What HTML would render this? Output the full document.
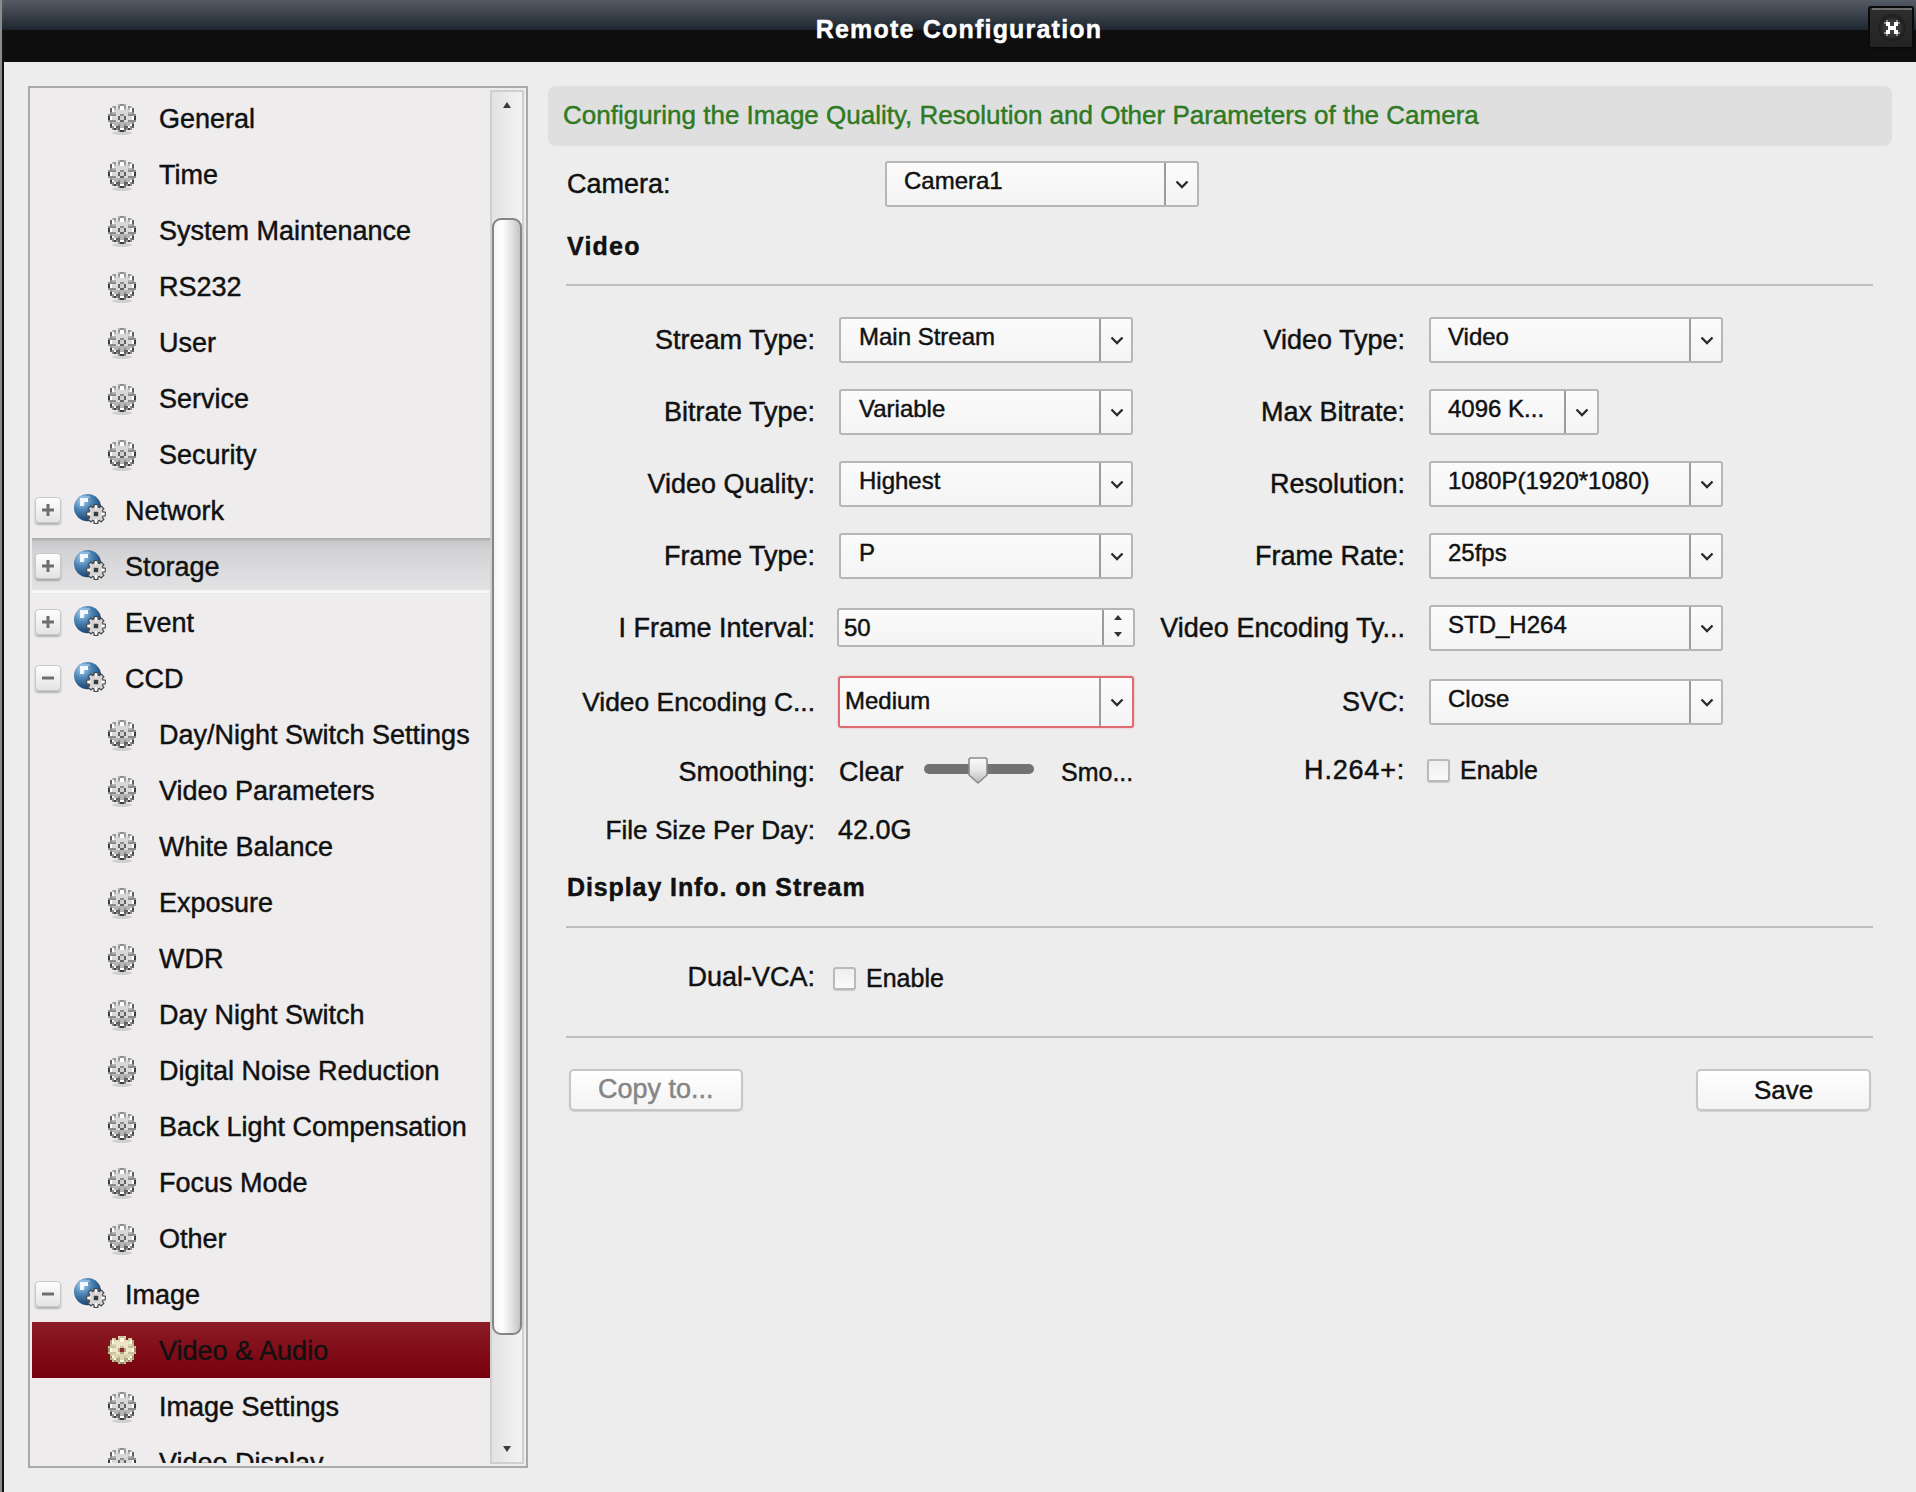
<!DOCTYPE html>
<html><head><meta charset="utf-8"><title>Remote Configuration</title><style>
*{margin:0;padding:0;box-sizing:border-box}
html,body{width:1916px;height:1492px;overflow:hidden;background:#ededed;font-family:"Liberation Sans",sans-serif}
.t{position:absolute;line-height:1;white-space:nowrap;-webkit-text-stroke:0.45px currentColor}
#title{position:absolute;left:0;top:0;width:1916px;height:30px;background:linear-gradient(#555b64,#1d2630)}
#titleblack{position:absolute;left:0;top:30px;width:1916px;height:32px;background:#0e0e0e}
#leftedge{position:absolute;left:0;top:0;width:4px;height:1492px;background:linear-gradient(90deg,#8c8c8c 0,#8c8c8c 2px,#111 2px)}#leftedge2{position:absolute;left:2px;top:0;width:2px;height:30px;background:linear-gradient(#5a6068,#1f2830)}
#closebtn{position:absolute;left:1868px;top:6px;width:46px;height:43px;border-radius:3px;background:linear-gradient(#2e2e2e,#232323);border:2px solid #0a0a0a}#closehl{position:absolute;left:1872px;top:8px;width:40px;height:2px;background:#6e6e6e}
#closering{position:absolute;left:1878px;top:14px;width:28px;height:28px;border-radius:50%;background:radial-gradient(circle,#454545 0,#353535 40%,#1e1e1e 64%,#2a2a2a 82%,rgba(40,40,40,0) 100%)}
#tree{position:absolute;left:30px;top:88px;width:460px;height:1375px;background:#eeeced;overflow:hidden}
#treeborder{position:absolute;left:28px;top:86px;width:500px;height:1382px;border:2px solid #a9a9a9}
.hover{position:absolute;left:2px;width:458px;height:56px;background:linear-gradient(#acacae 0,#b4b4b6 2px,#c6c6c8 3px,#d2d2d4 20%,#dcdcde 60%,#e2e2e4 92%,#f7f7f7 94%,#f7f7f7 98%,#e9e9e9 98%)}
.sel{position:absolute;left:2px;width:458px;height:56px;background:linear-gradient(#8b1c24,#78000e)}
.ic{position:absolute}
.exp{position:absolute;width:26px;height:26px;border-radius:4px;background:linear-gradient(#ffffff,#e3e3e3);border:1px solid #c9c9c9;box-shadow:0 2px 2px rgba(0,0,0,0.25)}
.exp svg{position:absolute;left:-1px;top:-1px}
#sbtrack{position:absolute;left:490px;top:90px;width:34px;height:1374px;border:2px solid #cfcfcf;background:linear-gradient(90deg,#e2e2e2,#f3f3f3)}
#sbthumb{position:absolute;left:492px;top:218px;width:30px;height:1117px;border:2px solid #858585;border-radius:9px 9px 9px 9px;background:linear-gradient(90deg,#f4f4f4 0,#ffffff 30%,#e0e0e0 70%,#c4c4c4 100%)}
#hdr{position:absolute;left:548px;top:86px;width:1344px;height:60px;border-radius:8px;background:#dfdfdf}
.dd{position:absolute;border:2px solid #b6b6b6;border-radius:3px;background:linear-gradient(#fbfbfb,#f4f4f4)}
.dd.red{border-color:#e06a70;box-shadow:0 0 2px rgba(220,60,60,0.4)}
.ddiv{position:absolute;width:2px;background:#9c9c9c}
.chev{position:absolute}
.hr{position:absolute;left:566px;width:1307px;height:2px;background:#bdbdbd}
#sltrack{position:absolute;left:924px;top:764px;width:110px;height:10px;border-radius:5px;background:#727272}
.cb{position:absolute;width:23px;height:23px;border:2px solid #b9b9b9;border-radius:3px;background:linear-gradient(#eeeeee,#fafafa);box-shadow:0 1px 1px rgba(0,0,0,0.15)}
.btn{position:absolute;border:2px solid #c6c6c6;border-radius:5px;background:linear-gradient(#ffffff,#f3f3f3);box-shadow:0 1px 1px rgba(0,0,0,0.12)}
</style></head>
<body><svg width="0" height="0" style="position:absolute"><defs>
<radialGradient id="gg" cx="0.35" cy="0.3" r="0.8"><stop offset="0" stop-color="#ffffff"/><stop offset="0.5" stop-color="#dcdcdc"/><stop offset="1" stop-color="#a9a9a9"/></radialGradient>
<radialGradient id="ggs" cx="0.35" cy="0.3" r="0.8"><stop offset="0" stop-color="#fffbe6"/><stop offset="0.5" stop-color="#ebe3bd"/><stop offset="1" stop-color="#c8bd8e"/></radialGradient>
<radialGradient id="glob" cx="0.3" cy="0.25" r="0.85"><stop offset="0" stop-color="#a9d0ec"/><stop offset="0.4" stop-color="#4f86b8"/><stop offset="0.8" stop-color="#23507f"/><stop offset="1" stop-color="#15345a"/></radialGradient>
<path id="gp" d="M-2.60 -10.69 L-2.60 -13.55 L2.60 -13.55 L2.60 -10.69 L5.72 -9.40 L7.74 -11.42 L11.42 -7.74 L9.40 -5.72 L10.69 -2.60 L13.55 -2.60 L13.55 2.60 L10.69 2.60 L9.40 5.72 L11.42 7.74 L7.74 11.42 L5.72 9.40 L2.60 10.69 L2.60 13.55 L-2.60 13.55 L-2.60 10.69 L-5.72 9.40 L-7.74 11.42 L-11.42 7.74 L-9.40 5.72 L-10.69 2.60 L-13.55 2.60 L-13.55 -2.60 L-10.69 -2.60 L-9.40 -5.72 L-11.42 -7.74 L-7.74 -11.42 L-5.72 -9.40 Z"/>
<path id="gps" d="M-2.00 -7.02 L-2.00 -9.29 L2.00 -9.29 L2.00 -7.02 L3.55 -6.38 L5.15 -7.98 L7.98 -5.15 L6.38 -3.55 L7.02 -2.00 L9.29 -2.00 L9.29 2.00 L7.02 2.00 L6.38 3.55 L7.98 5.15 L5.15 7.98 L3.55 6.38 L2.00 7.02 L2.00 9.29 L-2.00 9.29 L-2.00 7.02 L-3.55 6.38 L-5.15 7.98 L-7.98 5.15 L-6.38 3.55 L-7.02 2.00 L-9.29 2.00 L-9.29 -2.00 L-7.02 -2.00 L-6.38 -3.55 L-7.98 -5.15 L-5.15 -7.98 L-3.55 -6.38 Z"/>
<symbol id="gear" viewBox="0 0 32 34"><ellipse cx="16" cy="31" rx="10" ry="2" fill="#000" opacity="0.12"/><g shape-rendering="crispEdges"><rect x="12" y="2" width="2" height="2" fill="#b4b4b4"/><rect x="14" y="2" width="4" height="2" fill="#8c8c8c"/><rect x="18" y="2" width="2" height="2" fill="#b4b4b4"/><rect x="6" y="4" width="2" height="2" fill="#b4b4b4"/><rect x="8" y="4" width="2" height="2" fill="#8c8c8c"/><rect x="12" y="4" width="2" height="2" fill="#8c8c8c"/><rect x="14" y="4" width="4" height="2" fill="#ffffff"/><rect x="18" y="4" width="2" height="2" fill="#8c8c8c"/><rect x="22" y="4" width="2" height="2" fill="#8c8c8c"/><rect x="24" y="4" width="2" height="2" fill="#b4b4b4"/><rect x="4" y="6" width="2" height="2" fill="#626262"/><rect x="6" y="6" width="2" height="2" fill="#ffffff"/><rect x="8" y="6" width="2" height="2" fill="#b4b4b4"/><rect x="10" y="6" width="2" height="2" fill="#d9d9d9"/><rect x="12" y="6" width="2" height="2" fill="#b4b4b4"/><rect x="14" y="6" width="4" height="2" fill="#ffffff"/><rect x="18" y="6" width="2" height="2" fill="#b4b4b4"/><rect x="20" y="6" width="2" height="2" fill="#d9d9d9"/><rect x="22" y="6" width="2" height="2" fill="#b4b4b4"/><rect x="24" y="6" width="2" height="2" fill="#ffffff"/><rect x="26" y="6" width="2" height="2" fill="#626262"/><rect x="4" y="8" width="2" height="2" fill="#626262"/><rect x="6" y="8" width="2" height="2" fill="#ffffff"/><rect x="8" y="8" width="16" height="2" fill="#d9d9d9"/><rect x="24" y="8" width="2" height="2" fill="#ffffff"/><rect x="26" y="8" width="2" height="2" fill="#626262"/><rect x="4" y="10" width="2" height="2" fill="#8c8c8c"/><rect x="6" y="10" width="4" height="2" fill="#b4b4b4"/><rect x="10" y="10" width="12" height="2" fill="#d9d9d9"/><rect x="22" y="10" width="4" height="2" fill="#b4b4b4"/><rect x="26" y="10" width="2" height="2" fill="#8c8c8c"/><rect x="2" y="12" width="8" height="2" fill="#8c8c8c"/><rect x="10" y="12" width="4" height="2" fill="#d9d9d9"/><rect x="14" y="12" width="4" height="2" fill="#8c8c8c"/><rect x="18" y="12" width="4" height="2" fill="#d9d9d9"/><rect x="22" y="12" width="8" height="2" fill="#8c8c8c"/><rect x="2" y="14" width="2" height="2" fill="#3c3c3c"/><rect x="4" y="14" width="2" height="2" fill="#ffffff"/><rect x="6" y="14" width="6" height="2" fill="#d9d9d9"/><rect x="12" y="14" width="2" height="2" fill="#626262"/><rect x="14" y="14" width="4" height="2" fill="#d0d0d0"/><rect x="18" y="14" width="2" height="2" fill="#626262"/><rect x="20" y="14" width="6" height="2" fill="#d9d9d9"/><rect x="26" y="14" width="2" height="2" fill="#ffffff"/><rect x="28" y="14" width="2" height="2" fill="#3c3c3c"/><rect x="2" y="16" width="2" height="2" fill="#3c3c3c"/><rect x="4" y="16" width="2" height="2" fill="#ffffff"/><rect x="6" y="16" width="6" height="2" fill="#d9d9d9"/><rect x="12" y="16" width="2" height="2" fill="#626262"/><rect x="14" y="16" width="4" height="2" fill="#d0d0d0"/><rect x="18" y="16" width="2" height="2" fill="#626262"/><rect x="20" y="16" width="6" height="2" fill="#d9d9d9"/><rect x="26" y="16" width="2" height="2" fill="#ffffff"/><rect x="28" y="16" width="2" height="2" fill="#3c3c3c"/><rect x="2" y="18" width="8" height="2" fill="#8c8c8c"/><rect x="10" y="18" width="4" height="2" fill="#d9d9d9"/><rect x="14" y="18" width="4" height="2" fill="#626262"/><rect x="18" y="18" width="4" height="2" fill="#d9d9d9"/><rect x="22" y="18" width="8" height="2" fill="#8c8c8c"/><rect x="4" y="20" width="2" height="2" fill="#8c8c8c"/><rect x="6" y="20" width="20" height="2" fill="#b4b4b4"/><rect x="26" y="20" width="2" height="2" fill="#8c8c8c"/><rect x="4" y="22" width="2" height="2" fill="#3c3c3c"/><rect x="6" y="22" width="2" height="2" fill="#ffffff"/><rect x="8" y="22" width="4" height="2" fill="#b4b4b4"/><rect x="12" y="22" width="2" height="2" fill="#8c8c8c"/><rect x="14" y="22" width="4" height="2" fill="#b4b4b4"/><rect x="18" y="22" width="2" height="2" fill="#8c8c8c"/><rect x="20" y="22" width="4" height="2" fill="#b4b4b4"/><rect x="24" y="22" width="2" height="2" fill="#ffffff"/><rect x="26" y="22" width="2" height="2" fill="#3c3c3c"/><rect x="4" y="24" width="2" height="2" fill="#626262"/><rect x="6" y="24" width="2" height="2" fill="#8c8c8c"/><rect x="8" y="24" width="2" height="2" fill="#ffffff"/><rect x="10" y="24" width="4" height="2" fill="#626262"/><rect x="14" y="24" width="4" height="2" fill="#b4b4b4"/><rect x="18" y="24" width="4" height="2" fill="#626262"/><rect x="22" y="24" width="2" height="2" fill="#ffffff"/><rect x="24" y="24" width="2" height="2" fill="#8c8c8c"/><rect x="26" y="24" width="2" height="2" fill="#626262"/><rect x="6" y="26" width="2" height="2" fill="#8c8c8c"/><rect x="8" y="26" width="2" height="2" fill="#3c3c3c"/><rect x="10" y="26" width="2" height="2" fill="#8c8c8c"/><rect x="12" y="26" width="2" height="2" fill="#626262"/><rect x="14" y="26" width="4" height="2" fill="#ffffff"/><rect x="18" y="26" width="2" height="2" fill="#626262"/><rect x="20" y="26" width="2" height="2" fill="#8c8c8c"/><rect x="22" y="26" width="2" height="2" fill="#3c3c3c"/><rect x="24" y="26" width="2" height="2" fill="#8c8c8c"/><rect x="12" y="28" width="2" height="2" fill="#8c8c8c"/><rect x="14" y="28" width="4" height="2" fill="#3c3c3c"/><rect x="18" y="28" width="2" height="2" fill="#8c8c8c"/></g></symbol>
<symbol id="gearsel" viewBox="0 0 32 34"><g shape-rendering="crispEdges"><rect x="12" y="2" width="2" height="2" fill="#ddd5b0"/><rect x="14" y="2" width="4" height="2" fill="#c8c09a"/><rect x="18" y="2" width="2" height="2" fill="#ddd5b0"/><rect x="6" y="4" width="2" height="2" fill="#ddd5b0"/><rect x="8" y="4" width="2" height="2" fill="#c8c09a"/><rect x="12" y="4" width="2" height="2" fill="#c8c09a"/><rect x="14" y="4" width="4" height="2" fill="#fffbe2"/><rect x="18" y="4" width="2" height="2" fill="#c8c09a"/><rect x="22" y="4" width="2" height="2" fill="#c8c09a"/><rect x="24" y="4" width="2" height="2" fill="#ddd5b0"/><rect x="4" y="6" width="2" height="2" fill="#b0a880"/><rect x="6" y="6" width="2" height="2" fill="#fffbe2"/><rect x="8" y="6" width="2" height="2" fill="#ddd5b0"/><rect x="10" y="6" width="2" height="2" fill="#ece5c6"/><rect x="12" y="6" width="2" height="2" fill="#ddd5b0"/><rect x="14" y="6" width="4" height="2" fill="#fffbe2"/><rect x="18" y="6" width="2" height="2" fill="#ddd5b0"/><rect x="20" y="6" width="2" height="2" fill="#ece5c6"/><rect x="22" y="6" width="2" height="2" fill="#ddd5b0"/><rect x="24" y="6" width="2" height="2" fill="#fffbe2"/><rect x="26" y="6" width="2" height="2" fill="#b0a880"/><rect x="4" y="8" width="2" height="2" fill="#b0a880"/><rect x="6" y="8" width="2" height="2" fill="#fffbe2"/><rect x="8" y="8" width="16" height="2" fill="#ece5c6"/><rect x="24" y="8" width="2" height="2" fill="#fffbe2"/><rect x="26" y="8" width="2" height="2" fill="#b0a880"/><rect x="4" y="10" width="2" height="2" fill="#c8c09a"/><rect x="6" y="10" width="4" height="2" fill="#ddd5b0"/><rect x="10" y="10" width="12" height="2" fill="#ece5c6"/><rect x="22" y="10" width="4" height="2" fill="#ddd5b0"/><rect x="26" y="10" width="2" height="2" fill="#c8c09a"/><rect x="2" y="12" width="8" height="2" fill="#c8c09a"/><rect x="10" y="12" width="4" height="2" fill="#ece5c6"/><rect x="14" y="12" width="4" height="2" fill="#c8c09a"/><rect x="18" y="12" width="4" height="2" fill="#ece5c6"/><rect x="22" y="12" width="8" height="2" fill="#c8c09a"/><rect x="2" y="14" width="2" height="2" fill="#989068"/><rect x="4" y="14" width="2" height="2" fill="#fffbe2"/><rect x="6" y="14" width="6" height="2" fill="#ece5c6"/><rect x="12" y="14" width="2" height="2" fill="#b0a880"/><rect x="14" y="14" width="4" height="2" fill="#8e2a2c"/><rect x="18" y="14" width="2" height="2" fill="#b0a880"/><rect x="20" y="14" width="6" height="2" fill="#ece5c6"/><rect x="26" y="14" width="2" height="2" fill="#fffbe2"/><rect x="28" y="14" width="2" height="2" fill="#989068"/><rect x="2" y="16" width="2" height="2" fill="#989068"/><rect x="4" y="16" width="2" height="2" fill="#fffbe2"/><rect x="6" y="16" width="6" height="2" fill="#ece5c6"/><rect x="12" y="16" width="2" height="2" fill="#b0a880"/><rect x="14" y="16" width="4" height="2" fill="#8e2a2c"/><rect x="18" y="16" width="2" height="2" fill="#b0a880"/><rect x="20" y="16" width="6" height="2" fill="#ece5c6"/><rect x="26" y="16" width="2" height="2" fill="#fffbe2"/><rect x="28" y="16" width="2" height="2" fill="#989068"/><rect x="2" y="18" width="8" height="2" fill="#c8c09a"/><rect x="10" y="18" width="4" height="2" fill="#ece5c6"/><rect x="14" y="18" width="4" height="2" fill="#b0a880"/><rect x="18" y="18" width="4" height="2" fill="#ece5c6"/><rect x="22" y="18" width="8" height="2" fill="#c8c09a"/><rect x="4" y="20" width="2" height="2" fill="#c8c09a"/><rect x="6" y="20" width="20" height="2" fill="#ddd5b0"/><rect x="26" y="20" width="2" height="2" fill="#c8c09a"/><rect x="4" y="22" width="2" height="2" fill="#989068"/><rect x="6" y="22" width="2" height="2" fill="#fffbe2"/><rect x="8" y="22" width="4" height="2" fill="#ddd5b0"/><rect x="12" y="22" width="2" height="2" fill="#c8c09a"/><rect x="14" y="22" width="4" height="2" fill="#ddd5b0"/><rect x="18" y="22" width="2" height="2" fill="#c8c09a"/><rect x="20" y="22" width="4" height="2" fill="#ddd5b0"/><rect x="24" y="22" width="2" height="2" fill="#fffbe2"/><rect x="26" y="22" width="2" height="2" fill="#989068"/><rect x="4" y="24" width="2" height="2" fill="#b0a880"/><rect x="6" y="24" width="2" height="2" fill="#c8c09a"/><rect x="8" y="24" width="2" height="2" fill="#fffbe2"/><rect x="10" y="24" width="4" height="2" fill="#b0a880"/><rect x="14" y="24" width="4" height="2" fill="#ddd5b0"/><rect x="18" y="24" width="4" height="2" fill="#b0a880"/><rect x="22" y="24" width="2" height="2" fill="#fffbe2"/><rect x="24" y="24" width="2" height="2" fill="#c8c09a"/><rect x="26" y="24" width="2" height="2" fill="#b0a880"/><rect x="6" y="26" width="2" height="2" fill="#c8c09a"/><rect x="8" y="26" width="2" height="2" fill="#989068"/><rect x="10" y="26" width="2" height="2" fill="#c8c09a"/><rect x="12" y="26" width="2" height="2" fill="#b0a880"/><rect x="14" y="26" width="4" height="2" fill="#fffbe2"/><rect x="18" y="26" width="2" height="2" fill="#b0a880"/><rect x="20" y="26" width="2" height="2" fill="#c8c09a"/><rect x="22" y="26" width="2" height="2" fill="#989068"/><rect x="24" y="26" width="2" height="2" fill="#c8c09a"/><rect x="12" y="28" width="2" height="2" fill="#c8c09a"/><rect x="14" y="28" width="4" height="2" fill="#989068"/><rect x="18" y="28" width="2" height="2" fill="#c8c09a"/></g></symbol>
<symbol id="globe" viewBox="0 0 36 36">
 <circle cx="15.6" cy="15.6" r="13.6" fill="url(#glob)"/>
 <path d="M8 6 H16 V10 H12 V14 H8 Z" fill="#f3f8fc"/>
 <path d="M7 4 H18 V6 H7 Z" fill="#8dbbe0" opacity="0.8"/>
 <g transform="translate(24,22)">
  <use href="#gps" fill="#d6d6d6" stroke="#4a4a4a" stroke-width="1.2" stroke-linejoin="round"/>
  <g fill="#fff"><rect x="-1" y="-8.5" width="2" height="3"/><rect x="-1" y="5.5" width="2" height="3"/><rect x="-8.5" y="-1" width="3" height="2"/><rect x="5.5" y="-1" width="3" height="2"/></g>
  <rect x="-2.2" y="-2.2" width="4.4" height="4.4" fill="#3a3a3a"/>
 </g>
</symbol>
<symbol id="plus" viewBox="0 0 26 26"><path d="M7 13 H19 M13 7 V19" stroke="#6e6e6e" stroke-width="3"/></symbol>
<symbol id="minus" viewBox="0 0 26 26"><path d="M7 13 H19" stroke="#6e6e6e" stroke-width="3"/></symbol>
<symbol id="chev" viewBox="0 0 16 12"><path d="M2.5 3.5 L8 9 L13.5 3.5" fill="none" stroke="#2a2a2a" stroke-width="2.3"/></symbol>
</defs></svg>
<div id="title"></div><div id="titleblack"></div>
<div id="leftedge"></div><div id="leftedge2"></div>
<div class="t" style="left:659px;width:600px;text-align:center;top:16.6px;font-size:25px;font-weight:bold;color:#fff;letter-spacing:1.2px">Remote Configuration</div>
<div id="closebtn"></div><div id="closehl"></div><div id="closering"></div><svg style="position:absolute;left:1884px;top:20px" width="16" height="16" shape-rendering="crispEdges"><rect x="2" y="2" width="2" height="2" fill="#fff"/><rect x="4" y="2" width="2" height="2" fill="#fff"/><rect x="10" y="2" width="2" height="2" fill="#fff"/><rect x="12" y="2" width="2" height="2" fill="#fff"/><rect x="2" y="4" width="2" height="2" fill="#fff"/><rect x="4" y="4" width="2" height="2" fill="#fff"/><rect x="10" y="4" width="2" height="2" fill="#fff"/><rect x="12" y="4" width="2" height="2" fill="#fff"/><rect x="4" y="6" width="2" height="2" fill="#fff"/><rect x="6" y="6" width="2" height="2" fill="#fff"/><rect x="8" y="6" width="2" height="2" fill="#fff"/><rect x="10" y="6" width="2" height="2" fill="#fff"/><rect x="4" y="8" width="2" height="2" fill="#fff"/><rect x="6" y="8" width="2" height="2" fill="#fff"/><rect x="8" y="8" width="2" height="2" fill="#fff"/><rect x="10" y="8" width="2" height="2" fill="#fff"/><rect x="2" y="10" width="2" height="2" fill="#fff"/><rect x="4" y="10" width="2" height="2" fill="#fff"/><rect x="10" y="10" width="2" height="2" fill="#fff"/><rect x="12" y="10" width="2" height="2" fill="#fff"/><rect x="2" y="12" width="2" height="2" fill="#fff"/><rect x="4" y="12" width="2" height="2" fill="#fff"/><rect x="10" y="12" width="2" height="2" fill="#fff"/><rect x="12" y="12" width="2" height="2" fill="#fff"/><rect x="2" y="0" width="2" height="2" fill="#8a8a8a"/><rect x="12" y="0" width="2" height="2" fill="#8a8a8a"/><rect x="0" y="2" width="2" height="2" fill="#8a8a8a"/><rect x="14" y="2" width="2" height="2" fill="#8a8a8a"/><rect x="0" y="12" width="2" height="2" fill="#8a8a8a"/><rect x="14" y="12" width="2" height="2" fill="#8a8a8a"/><rect x="2" y="14" width="2" height="2" fill="#8a8a8a"/><rect x="12" y="14" width="2" height="2" fill="#8a8a8a"/></svg>
<div id="tree">
<svg class="ic" style="left:76px;top:14px" width="32" height="34"><use href="#gear"/></svg>
<div class="t" style="left:129px;top:17.9px;font-size:27px;font-weight:normal;color:#111;">General</div>
<svg class="ic" style="left:76px;top:70px" width="32" height="34"><use href="#gear"/></svg>
<div class="t" style="left:129px;top:73.9px;font-size:27px;font-weight:normal;color:#111;">Time</div>
<svg class="ic" style="left:76px;top:126px" width="32" height="34"><use href="#gear"/></svg>
<div class="t" style="left:129px;top:129.9px;font-size:27px;font-weight:normal;color:#111;">System Maintenance</div>
<svg class="ic" style="left:76px;top:182px" width="32" height="34"><use href="#gear"/></svg>
<div class="t" style="left:129px;top:185.9px;font-size:27px;font-weight:normal;color:#111;">RS232</div>
<svg class="ic" style="left:76px;top:238px" width="32" height="34"><use href="#gear"/></svg>
<div class="t" style="left:129px;top:241.9px;font-size:27px;font-weight:normal;color:#111;">User</div>
<svg class="ic" style="left:76px;top:294px" width="32" height="34"><use href="#gear"/></svg>
<div class="t" style="left:129px;top:297.9px;font-size:27px;font-weight:normal;color:#111;">Service</div>
<svg class="ic" style="left:76px;top:350px" width="32" height="34"><use href="#gear"/></svg>
<div class="t" style="left:129px;top:353.9px;font-size:27px;font-weight:normal;color:#111;">Security</div>
<div class="exp" style="left:5px;top:409px"><svg width="26" height="26"><use href="#plus"/></svg></div>
<svg class="ic" style="left:42px;top:404px" width="36" height="36"><use href="#globe"/></svg>
<div class="t" style="left:95px;top:409.9px;font-size:27px;font-weight:normal;color:#111;">Network</div>
<div class="hover" style="top:450px"></div>
<div class="exp" style="left:5px;top:465px"><svg width="26" height="26"><use href="#plus"/></svg></div>
<svg class="ic" style="left:42px;top:460px" width="36" height="36"><use href="#globe"/></svg>
<div class="t" style="left:95px;top:465.9px;font-size:27px;font-weight:normal;color:#111;">Storage</div>
<div class="exp" style="left:5px;top:521px"><svg width="26" height="26"><use href="#plus"/></svg></div>
<svg class="ic" style="left:42px;top:516px" width="36" height="36"><use href="#globe"/></svg>
<div class="t" style="left:95px;top:521.9px;font-size:27px;font-weight:normal;color:#111;">Event</div>
<div class="exp" style="left:5px;top:577px"><svg width="26" height="26"><use href="#minus"/></svg></div>
<svg class="ic" style="left:42px;top:572px" width="36" height="36"><use href="#globe"/></svg>
<div class="t" style="left:95px;top:577.9px;font-size:27px;font-weight:normal;color:#111;">CCD</div>
<svg class="ic" style="left:76px;top:630px" width="32" height="34"><use href="#gear"/></svg>
<div class="t" style="left:129px;top:633.9px;font-size:27px;font-weight:normal;color:#111;">Day/Night Switch Settings</div>
<svg class="ic" style="left:76px;top:686px" width="32" height="34"><use href="#gear"/></svg>
<div class="t" style="left:129px;top:689.9px;font-size:27px;font-weight:normal;color:#111;">Video Parameters</div>
<svg class="ic" style="left:76px;top:742px" width="32" height="34"><use href="#gear"/></svg>
<div class="t" style="left:129px;top:745.9px;font-size:27px;font-weight:normal;color:#111;">White Balance</div>
<svg class="ic" style="left:76px;top:798px" width="32" height="34"><use href="#gear"/></svg>
<div class="t" style="left:129px;top:801.9px;font-size:27px;font-weight:normal;color:#111;">Exposure</div>
<svg class="ic" style="left:76px;top:854px" width="32" height="34"><use href="#gear"/></svg>
<div class="t" style="left:129px;top:857.9px;font-size:27px;font-weight:normal;color:#111;">WDR</div>
<svg class="ic" style="left:76px;top:910px" width="32" height="34"><use href="#gear"/></svg>
<div class="t" style="left:129px;top:913.9px;font-size:27px;font-weight:normal;color:#111;">Day Night Switch</div>
<svg class="ic" style="left:76px;top:966px" width="32" height="34"><use href="#gear"/></svg>
<div class="t" style="left:129px;top:969.9px;font-size:27px;font-weight:normal;color:#111;">Digital Noise Reduction</div>
<svg class="ic" style="left:76px;top:1022px" width="32" height="34"><use href="#gear"/></svg>
<div class="t" style="left:129px;top:1025.9px;font-size:27px;font-weight:normal;color:#111;">Back Light Compensation</div>
<svg class="ic" style="left:76px;top:1078px" width="32" height="34"><use href="#gear"/></svg>
<div class="t" style="left:129px;top:1081.9px;font-size:27px;font-weight:normal;color:#111;">Focus Mode</div>
<svg class="ic" style="left:76px;top:1134px" width="32" height="34"><use href="#gear"/></svg>
<div class="t" style="left:129px;top:1137.9px;font-size:27px;font-weight:normal;color:#111;">Other</div>
<div class="exp" style="left:5px;top:1193px"><svg width="26" height="26"><use href="#minus"/></svg></div>
<svg class="ic" style="left:42px;top:1188px" width="36" height="36"><use href="#globe"/></svg>
<div class="t" style="left:95px;top:1193.9px;font-size:27px;font-weight:normal;color:#111;">Image</div>
<div class="sel" style="top:1234px"></div>
<svg class="ic" style="left:76px;top:1246px" width="32" height="34"><use href="#gearsel"/></svg>
<div class="t" style="left:129px;top:1249.9px;font-size:27px;font-weight:normal;color:#111;">Video &amp; Audio</div>
<svg class="ic" style="left:76px;top:1302px" width="32" height="34"><use href="#gear"/></svg>
<div class="t" style="left:129px;top:1305.9px;font-size:27px;font-weight:normal;color:#111;">Image Settings</div>
<svg class="ic" style="left:76px;top:1358px" width="32" height="34"><use href="#gear"/></svg>
<div class="t" style="left:129px;top:1361.9px;font-size:27px;font-weight:normal;color:#111;">Video Display</div>
</div>
<div id="treeborder"></div>
<div id="sbtrack"></div><div id="sbthumb"></div>
<svg style="position:absolute;left:500px;top:100px" width="14" height="10"><path d="M7 2 L11 8 L3 8 Z" fill="#3a3a3a"/></svg>
<svg style="position:absolute;left:500px;top:1444px" width="14" height="10"><path d="M3 2 L11 2 L7 8 Z" fill="#3a3a3a"/></svg>
<div id="hdr"></div>
<div class="t" style="left:563px;top:101.6px;font-size:26px;font-weight:normal;color:#2f7a22;">Configuring the Image Quality, Resolution and Other Parameters of the Camera</div>
<div class="t" style="left:567px;top:170.5px;font-size:27px;font-weight:normal;color:#111;">Camera:</div>
<div class="dd" style="left:885px;top:161px;width:314px;height:46px"></div><div class="ddiv" style="left:1164px;top:163px;height:42px"></div><svg class="chev" style="left:1174px;top:178px" width="16" height="12"><use href="#chev"/></svg><div class="t" style="left:904px;top:169.4px;font-size:24px;font-weight:normal;color:#111;">Camera1</div>
<div class="t" style="left:567px;top:234.3px;font-size:25px;font-weight:bold;color:#111;letter-spacing:1.2px">Video</div>
<div class="hr" style="top:284px"></div>
<div class="t" style="right:1101px;top:326.7px;font-size:27px;font-weight:normal;color:#111;">Stream Type:</div>
<div class="dd" style="left:839px;top:317px;width:294px;height:46px"></div><div class="ddiv" style="left:1099px;top:319px;height:42px"></div><svg class="chev" style="left:1109px;top:334px" width="16" height="12"><use href="#chev"/></svg><div class="t" style="left:859px;top:325.4px;font-size:24px;font-weight:normal;color:#111;">Main Stream</div>
<div class="t" style="right:1101px;top:398.7px;font-size:27px;font-weight:normal;color:#111;">Bitrate Type:</div>
<div class="dd" style="left:839px;top:389px;width:294px;height:46px"></div><div class="ddiv" style="left:1099px;top:391px;height:42px"></div><svg class="chev" style="left:1109px;top:406px" width="16" height="12"><use href="#chev"/></svg><div class="t" style="left:859px;top:397.4px;font-size:24px;font-weight:normal;color:#111;">Variable</div>
<div class="t" style="right:1101px;top:470.7px;font-size:27px;font-weight:normal;color:#111;">Video Quality:</div>
<div class="dd" style="left:839px;top:461px;width:294px;height:46px"></div><div class="ddiv" style="left:1099px;top:463px;height:42px"></div><svg class="chev" style="left:1109px;top:478px" width="16" height="12"><use href="#chev"/></svg><div class="t" style="left:859px;top:469.4px;font-size:24px;font-weight:normal;color:#111;">Highest</div>
<div class="t" style="right:1101px;top:542.7px;font-size:27px;font-weight:normal;color:#111;">Frame Type:</div>
<div class="dd" style="left:839px;top:533px;width:294px;height:46px"></div><div class="ddiv" style="left:1099px;top:535px;height:42px"></div><svg class="chev" style="left:1109px;top:550px" width="16" height="12"><use href="#chev"/></svg><div class="t" style="left:859px;top:541.4px;font-size:24px;font-weight:normal;color:#111;">P</div>
<div class="t" style="right:1101px;top:614.7px;font-size:27px;font-weight:normal;color:#111;">I Frame Interval:</div>
<div class="dd" style="left:837px;top:608px;width:298px;height:39px"></div>
<div class="ddiv" style="left:1102px;top:610px;height:35px"></div>
<svg style="position:absolute;left:1111px;top:614px" width="14" height="30"><path d="M7 1 L11 6 L3 6 Z M3 18 L11 18 L7 23 Z" fill="#333"/></svg>
<div class="t" style="left:844px;top:616.2px;font-size:24px;font-weight:normal;color:#111;">50</div>
<div class="t" style="right:1101px;top:689.3px;font-size:26.4px;font-weight:normal;color:#111;">Video Encoding C...</div>
<div class="dd red" style="left:838px;top:676px;width:296px;height:52px"></div><div class="ddiv" style="left:1099px;top:678px;height:48px"></div><svg class="chev" style="left:1109px;top:696px" width="16" height="12"><use href="#chev"/></svg><div class="t" style="left:845px;top:688.9px;font-size:24px;font-weight:normal;color:#111;">Medium</div>
<div class="t" style="right:511px;top:326.7px;font-size:27px;font-weight:normal;color:#111;">Video Type:</div>
<div class="dd" style="left:1429px;top:317px;width:294px;height:46px"></div><div class="ddiv" style="left:1689px;top:319px;height:42px"></div><svg class="chev" style="left:1699px;top:334px" width="16" height="12"><use href="#chev"/></svg><div class="t" style="left:1448px;top:325.4px;font-size:24px;font-weight:normal;color:#111;">Video</div>
<div class="t" style="right:511px;top:398.7px;font-size:27px;font-weight:normal;color:#111;">Max Bitrate:</div>
<div class="dd" style="left:1429px;top:389px;width:170px;height:46px"></div><div class="ddiv" style="left:1564px;top:391px;height:42px"></div><svg class="chev" style="left:1574px;top:406px" width="16" height="12"><use href="#chev"/></svg><div class="t" style="left:1448px;top:397.4px;font-size:24px;font-weight:normal;color:#111;">4096 K...</div>
<div class="t" style="right:511px;top:470.7px;font-size:27px;font-weight:normal;color:#111;">Resolution:</div>
<div class="dd" style="left:1429px;top:461px;width:294px;height:46px"></div><div class="ddiv" style="left:1689px;top:463px;height:42px"></div><svg class="chev" style="left:1699px;top:478px" width="16" height="12"><use href="#chev"/></svg><div class="t" style="left:1448px;top:469.4px;font-size:24px;font-weight:normal;color:#111;">1080P(1920*1080)</div>
<div class="t" style="right:511px;top:542.7px;font-size:27px;font-weight:normal;color:#111;">Frame Rate:</div>
<div class="dd" style="left:1429px;top:533px;width:294px;height:46px"></div><div class="ddiv" style="left:1689px;top:535px;height:42px"></div><svg class="chev" style="left:1699px;top:550px" width="16" height="12"><use href="#chev"/></svg><div class="t" style="left:1448px;top:541.4px;font-size:24px;font-weight:normal;color:#111;">25fps</div>
<div class="t" style="right:511px;top:614.7px;font-size:27px;font-weight:normal;color:#111;">Video Encoding Ty...</div>
<div class="dd" style="left:1429px;top:605px;width:294px;height:46px"></div><div class="ddiv" style="left:1689px;top:607px;height:42px"></div><svg class="chev" style="left:1699px;top:622px" width="16" height="12"><use href="#chev"/></svg><div class="t" style="left:1448px;top:613.4px;font-size:24px;font-weight:normal;color:#111;">STD_H264</div>
<div class="t" style="right:511px;top:688.7px;font-size:27px;font-weight:normal;color:#111;">SVC:</div>
<div class="dd" style="left:1429px;top:679px;width:294px;height:46px"></div><div class="ddiv" style="left:1689px;top:681px;height:42px"></div><svg class="chev" style="left:1699px;top:696px" width="16" height="12"><use href="#chev"/></svg><div class="t" style="left:1448px;top:687.4px;font-size:24px;font-weight:normal;color:#111;">Close</div>
<div class="t" style="right:1101px;top:758.5px;font-size:27px;font-weight:normal;color:#111;">Smoothing:</div>
<div class="t" style="left:839px;top:758.5px;font-size:27px;font-weight:normal;color:#111;">Clear</div>
<div id="sltrack"></div>
<svg style="position:absolute;left:967px;top:757px" width="22" height="28"><defs><linearGradient id="thg" x1="0" y1="0" x2="0" y2="1"><stop offset="0" stop-color="#fbfbfb"/><stop offset="0.5" stop-color="#e6e6e6"/><stop offset="1" stop-color="#b9b9b9"/></linearGradient></defs><path d="M2 3 Q2 1 4 1 L18 1 Q20 1 20 3 L20 18 L11 26 L2 18 Z" fill="url(#thg)" stroke="#8a8a8a" stroke-width="1.6"/></svg>
<div class="t" style="left:1061px;top:760.2px;font-size:25px;font-weight:normal;color:#111;">Smo...</div>
<div class="t" style="right:511px;top:756.6px;font-size:27px;font-weight:normal;color:#111;letter-spacing:0.8px">H.264+:</div>
<div class="cb" style="left:1427px;top:759px"></div>
<div class="t" style="left:1460px;top:758.3px;font-size:25px;font-weight:normal;color:#111;">Enable</div>
<div class="t" style="right:1101px;top:817.2px;font-size:26.2px;font-weight:normal;color:#111;">File Size Per Day:</div>
<div class="t" style="left:838px;top:816.5px;font-size:27px;font-weight:normal;color:#111;">42.0G</div>
<div class="t" style="left:567px;top:874.8px;font-size:25px;font-weight:bold;color:#111;letter-spacing:0.9px">Display Info. on Stream</div>
<div class="hr" style="top:926px"></div>
<div class="t" style="right:1101px;top:964.2px;font-size:27px;font-weight:normal;color:#111;">Dual-VCA:</div>
<div class="cb" style="left:833px;top:967px"></div>
<div class="t" style="left:866px;top:965.9px;font-size:25px;font-weight:normal;color:#111;">Enable</div>
<div class="hr" style="top:1036px"></div>
<div class="btn" style="left:569px;top:1069px;width:174px;height:42px"></div>
<div class="t" style="left:598px;top:1076.1px;font-size:27px;font-weight:normal;color:#858585;">Copy to...</div>
<div class="btn" style="left:1696px;top:1069px;width:175px;height:42px"></div>
<div class="t" style="left:1754px;top:1077.0px;font-size:26px;font-weight:normal;color:#111;">Save</div>
</body></html>
